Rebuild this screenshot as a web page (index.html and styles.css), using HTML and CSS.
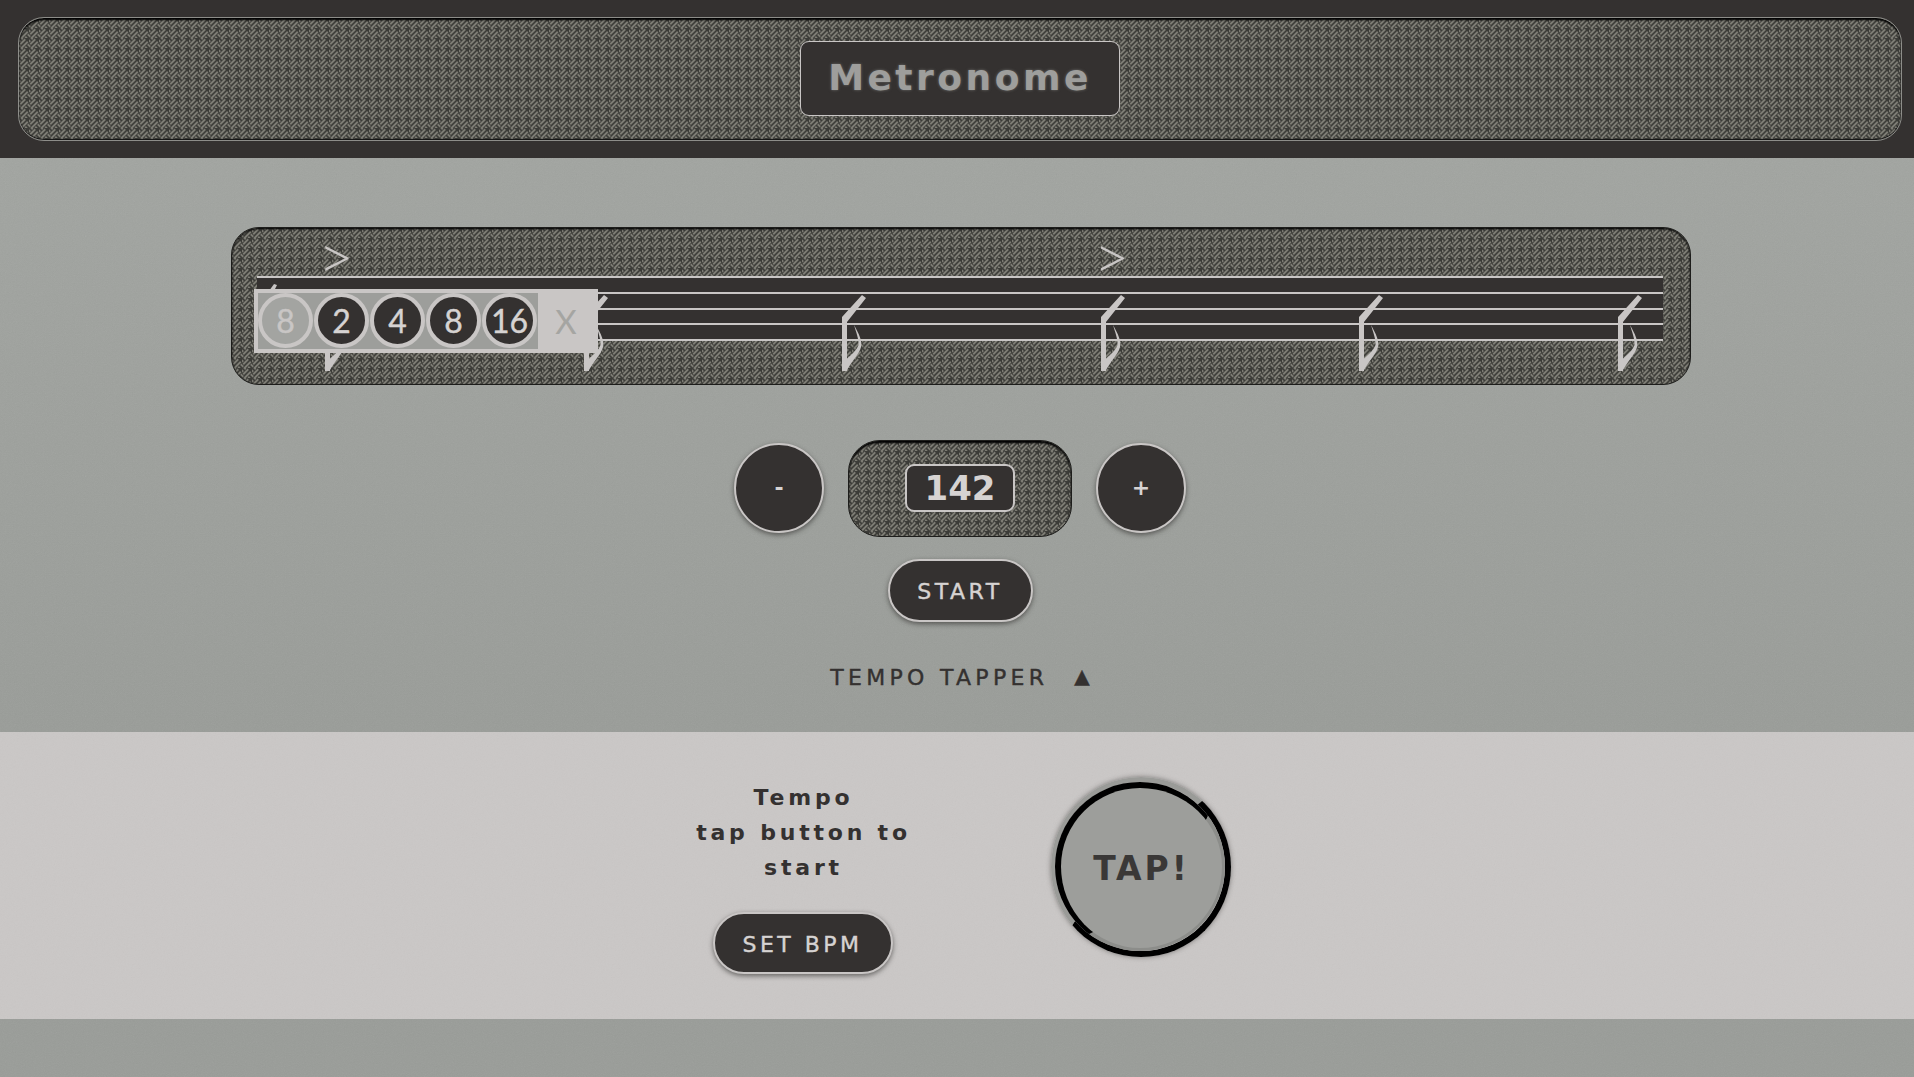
FILE: index.html
```html
<!DOCTYPE html>
<html lang="en">
<head>
    <meta charset="UTF-8">
    <meta name="viewport" content="width=device-width, initial-scale=1.0">
    <title>Metronome</title>
    <link rel="stylesheet" href="styles.css">
</head>
<body>
    <header class="header">
        <div class="header-panel weave">
            <h1 class="title">Metronome</h1>
        </div>
    </header>

    <main class="main">
        <section class="measure weave">
            <div class="accents">
                <span class="accent">&gt;</span>
                <span class="accent-gap"></span>
                <span class="accent-gap"></span>
                <span class="accent">&gt;</span>
            </div>

            <div class="staff">
                <div class="staff-line"></div>
                <div class="staff-line"></div>
                <div class="staff-line"></div>
                <div class="staff-line"></div>
                <div class="staff-line"></div>

                <svg class="tick" viewBox="0 0 10 8"><path d="M1 8 L6 1 L9 2 L6 8 Z"/></svg>

                <div class="notes">
                    <svg class="note" viewBox="0 0 28 78"><path d="M1 23 L21 1 L25 4 L6 28 L6 77 L1 77 Z"/><path d="M13 31 C18 40 21.5 47 20 53 C18.5 60 10 68 5.5 77 L5.5 65 C11 60 16 56 17.5 51 C18 45 15 38 13 31 Z"/></svg>
                    <svg class="note" viewBox="0 0 28 78"><path d="M1 23 L21 1 L25 4 L6 28 L6 77 L1 77 Z"/><path d="M13 31 C18 40 21.5 47 20 53 C18.5 60 10 68 5.5 77 L5.5 65 C11 60 16 56 17.5 51 C18 45 15 38 13 31 Z"/></svg>
                    <svg class="note" viewBox="0 0 28 78"><path d="M1 23 L21 1 L25 4 L6 28 L6 77 L1 77 Z"/><path d="M13 31 C18 40 21.5 47 20 53 C18.5 60 10 68 5.5 77 L5.5 65 C11 60 16 56 17.5 51 C18 45 15 38 13 31 Z"/></svg>
                    <svg class="note" viewBox="0 0 28 78"><path d="M1 23 L21 1 L25 4 L6 28 L6 77 L1 77 Z"/><path d="M13 31 C18 40 21.5 47 20 53 C18.5 60 10 68 5.5 77 L5.5 65 C11 60 16 56 17.5 51 C18 45 15 38 13 31 Z"/></svg>
                    <svg class="note" viewBox="0 0 28 78"><path d="M1 23 L21 1 L25 4 L6 28 L6 77 L1 77 Z"/><path d="M13 31 C18 40 21.5 47 20 53 C18.5 60 10 68 5.5 77 L5.5 65 C11 60 16 56 17.5 51 C18 45 15 38 13 31 Z"/></svg>
                    <svg class="note" viewBox="0 0 28 78"><path d="M1 23 L21 1 L25 4 L6 28 L6 77 L1 77 Z"/><path d="M13 31 C18 40 21.5 47 20 53 C18.5 60 10 68 5.5 77 L5.5 65 C11 60 16 56 17.5 51 C18 45 15 38 13 31 Z"/></svg>
                </div>

                <div class="note-picker">
                    <div class="picker-options">
                        <button class="picker-btn current">8</button>
                        <button class="picker-btn">2</button>
                        <button class="picker-btn">4</button>
                        <button class="picker-btn">8</button>
                        <button class="picker-btn">16</button>
                    </div>
                    <span class="picker-close">X</span>
                </div>
            </div>
        </section>

        <section class="tempo">
            <button class="round-btn">-</button>
            <div class="bpm-panel weave">
                <div class="bpm-value">142</div>
            </div>
            <button class="round-btn">+</button>
        </section>

        <button class="pill-btn start-btn">START</button>

        <div class="tapper-toggle">
            <span>TEMPO TAPPER</span>
            <span class="arrow">&#9650;</span>
        </div>
    </main>

    <section class="tapper">
        <div class="tapper-info">
            <p class="tapper-text">Tempo<br>tap button to<br>start</p>
            <button class="pill-btn set-btn">SET BPM</button>
        </div>
        <div class="tap-ring">
            <button class="tap-btn">TAP!</button>
        </div>
    </section>
</body>
</html>
```

FILE: styles.css
```css
* {
    box-sizing: border-box;
}

body {
    margin: 0;
    height: 1077px;
    overflow: hidden;
    font-family: "DejaVu Sans", "Liberation Sans", sans-serif;
    color: #343130;
    background-color: #999c98;
    background-image:
        url("data:image/svg+xml,%3Csvg xmlns='http://www.w3.org/2000/svg' width='240' height='240'%3E%3Cfilter id='n'%3E%3CfeTurbulence type='fractalNoise' baseFrequency='.9' numOctaves='2'/%3E%3CfeColorMatrix type='saturate' values='0'/%3E%3C/filter%3E%3Crect width='240' height='240' filter='url(%23n)' opacity='.09'/%3E%3C/svg%3E"),
        linear-gradient(#a1a4a0 158px, #999c98 732px);
}

button {
    font-family: inherit;
}

.weave {
    background-color: #3c3c38;
    background-image: url("data:image/svg+xml,%3Csvg xmlns='http://www.w3.org/2000/svg' width='10' height='10'%3E%3Cg stroke='%237d7c74' stroke-width='1.8' fill='none'%3E%3Cpath d='M3.75 8.75 L8.75 3.75 M1.25 6.25 L6.25 1.25 M1.25 3.75 L-1.25 1.25 M3.75 1.25 L1.25 -1.25 M8.75 6.25 L11.25 8.75 M6.25 8.75 L8.75 11.25 M-1.25 6.25 L1.25 8.75 M1.25 11.25 L3.75 8.75'/%3E%3C/g%3E%3C/svg%3E");
}

.header {
    height: 158px;
    padding: 17px 12px 0 18px;
    background-color: #343130;
}

.header-panel {
    display: flex;
    align-items: center;
    justify-content: center;
    height: 124px;
    border-radius: 26px;
    border: 1px solid #8d8d89;
    box-shadow: inset 0 2px 2px #000, inset 0 -1px 1px #111;
}

.title {
    display: flex;
    align-items: center;
    justify-content: center;
    width: 320px;
    height: 75px;
    margin: 0 0 1px;
    padding-bottom: 2px;
    background-color: #343130;
    border: 1.5px solid #c9c6c5;
    border-radius: 9px;
    font-size: 36px;
    font-weight: 700;
    letter-spacing: 3.5px;
    color: #9e9e9c;
    text-shadow: 0 0 3px #6f6f6c;
}

.main {
    display: flex;
    flex-direction: column;
    align-items: center;
    height: 574px;
    padding: 69px 0 0 6px;
}

.measure {
    align-self: flex-start;
    width: 1460px;
    height: 158px;
    margin-left: 225px;
    padding: 0 27px 0 25px;
    border: 1px solid #1d1d1b;
    border-radius: 28px;
    box-shadow: inset 0 1px 2px #000;
}

.accents {
    display: grid;
    grid-template-columns: repeat(6, 258.5px);
    height: 48px;
    padding-left: 61px;
}

.accent {
    font-family: "Lato", sans-serif;
    font-size: 62px;
    font-weight: 300;
    line-height: 54px;
    color: #c9c6c5;
}

.staff {
    position: relative;
    display: flex;
    flex-direction: column;
    justify-content: space-between;
    height: 65px;
    background-color: #343130;
}

.staff-line {
    height: 2px;
    background-color: #c9c6c5;
}

.tick {
    position: absolute;
    left: 11px;
    top: 7px;
    width: 10px;
    height: 8px;
    fill: #c9c6c5;
}

.notes {
    position: absolute;
    left: 67px;
    top: 18px;
    display: flex;
    gap: 230.5px;
}

.note {
    flex: none;
    width: 28px;
    height: 78px;
    fill: #c9c6c5;
}

.note-picker {
    position: absolute;
    left: -3px;
    top: 13px;
    display: flex;
    align-items: center;
    width: 344px;
    height: 64px;
    padding: 4px;
    background-color: #c9c6c5;
}

.picker-options {
    display: flex;
    gap: 1px;
    width: 280px;
    height: 56px;
    background-color: #9d9e9b;
}

.picker-btn {
    flex: none;
    width: 55px;
    height: 55px;
    padding: 0;
    background-color: #343130;
    border: 4px solid #c9c6c5;
    border-radius: 50%;
    font-family: "Lato", sans-serif;
    font-size: 32px;
    line-height: 1;
    color: #d6d3d2;
    -webkit-text-stroke: 0.4px currentColor;
}

.picker-btn.current {
    background-color: #a3a4a1;
    color: #c9c6c5;
}

.picker-close {
    flex: 1;
    font-family: "Lato", sans-serif;
    font-size: 33px;
    text-align: center;
    color: #a5a5a2;
}

.tempo {
    display: flex;
    align-items: center;
    gap: 24px;
    margin-top: 55px;
}

.round-btn {
    width: 90px;
    height: 90px;
    margin-bottom: 2px;
    padding: 0;
    background-color: #343130;
    border: 2px solid #c9c6c5;
    border-radius: 50%;
    box-shadow: 0 2px 5px rgba(40, 38, 36, 0.6);
    font-size: 22px;
    font-weight: 700;
    color: #d6d3d2;
}

.bpm-panel {
    display: flex;
    align-items: center;
    justify-content: center;
    width: 224px;
    height: 97px;
    border: 1px solid #1d1d1b;
    border-radius: 32px;
    box-shadow: inset 0 2px 2px #000;
}

.bpm-value {
    width: 110px;
    height: 48px;
    margin-bottom: 2px;
    background-color: #343130;
    border: 2px solid #c9c6c5;
    border-radius: 9px;
    font-size: 34px;
    font-weight: 700;
    line-height: 44px;
    text-align: center;
    color: #d6d3d2;
}

.pill-btn {
    padding: 2px 0 0;
    background-color: #343130;
    border: 2px solid #c9c6c5;
    border-radius: 32px;
    box-shadow: 0 2px 5px rgba(40, 38, 36, 0.6);
    font-size: 22px;
    letter-spacing: 3.5px;
    color: #d6d3d2;
    -webkit-text-stroke: 0.4px currentColor;
}

.start-btn {
    width: 145px;
    height: 63px;
    margin-top: 22px;
}

.tapper-toggle {
    display: flex;
    align-items: center;
    gap: 26px;
    margin-top: 42px;
    font-size: 22px;
    letter-spacing: 4.3px;
    -webkit-text-stroke: 0.4px currentColor;
}

.arrow {
    margin-bottom: 3px;
    font-size: 20px;
    letter-spacing: 0;
}

.tapper {
    display: flex;
    align-items: flex-start;
    justify-content: center;
    gap: 132.5px;
    height: 287px;
    padding: 45px 0 0 5.5px;
    background-color: #cac7c6;
    background-image: url("data:image/svg+xml,%3Csvg xmlns='http://www.w3.org/2000/svg' width='240' height='240'%3E%3Cfilter id='n'%3E%3CfeTurbulence type='fractalNoise' baseFrequency='.9' numOctaves='2'/%3E%3CfeColorMatrix type='saturate' values='0'/%3E%3C/filter%3E%3Crect width='240' height='240' filter='url(%23n)' opacity='.06'/%3E%3C/svg%3E");
}

.tapper-info {
    display: flex;
    flex-direction: column;
    align-items: center;
    width: 230px;
    padding-top: 3px;
}

.tapper-text {
    margin: 0;
    font-size: 22px;
    font-weight: 700;
    line-height: 35px;
    letter-spacing: 3.8px;
    text-align: center;
}

.set-btn {
    width: 180px;
    height: 62px;
    margin: 27px 2px 0 0;
}

.tap-ring {
    width: 180px;
    height: 180px;
    border-style: solid;
    border-width: 5px 6px 6px 4px;
    border-color: #9a9b98 #000 #000 #9a9b98;
    border-radius: 50%;
    box-shadow: 0 0 5px rgba(40, 38, 36, 0.5);
}

.tap-btn {
    display: block;
    width: 100%;
    height: 100%;
    padding: 0;
    background-color: #9d9e9b;
    border-style: solid;
    border-width: 6px 3px 3px 6px;
    border-color: #000 #8c8d8a #8c8d8a #000;
    border-radius: 50%;
    font-size: 33px;
    font-weight: 700;
    letter-spacing: 3px;
    color: #3a3837;
}
```
